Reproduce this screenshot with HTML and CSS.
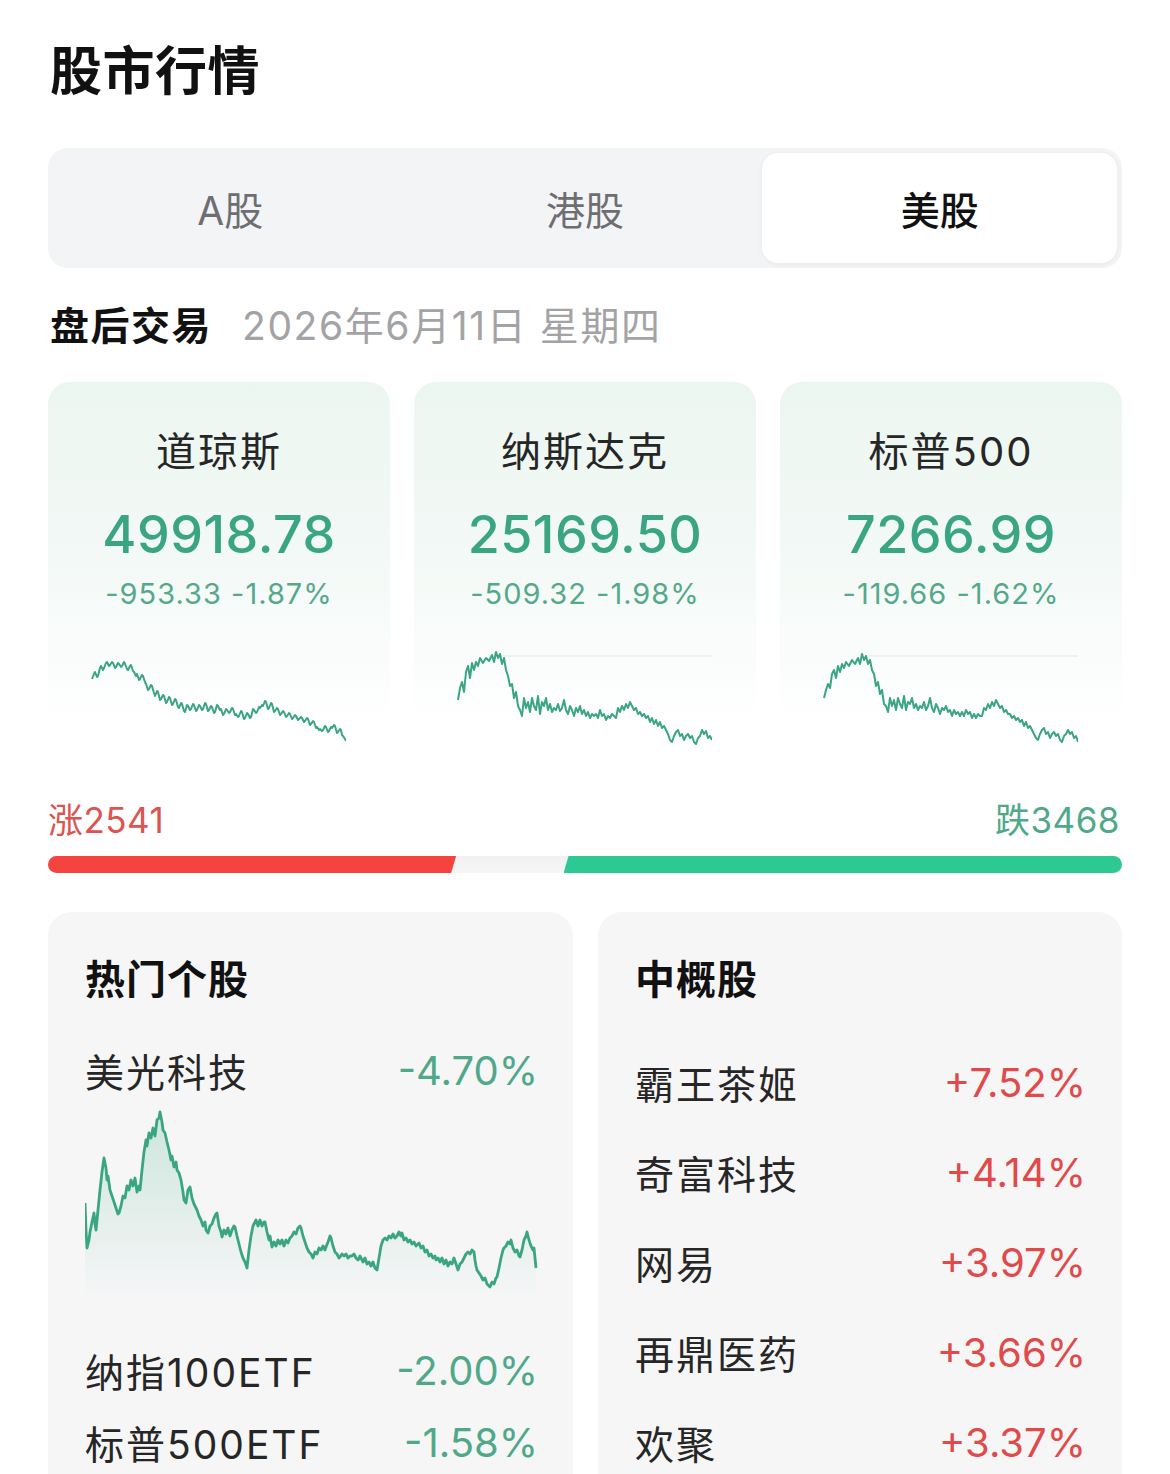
FILE: index.html
```html
<!DOCTYPE html>
<html lang="zh-CN">
<head>
<meta charset="utf-8">
<title>股市行情</title>
<link rel="stylesheet" href="styles.css">
</head>
<body>
<div class="page">
  <h1 class="title">股市行情</h1>

  <div class="tabs">
    <div class="tab">A股</div>
    <div class="tab">港股</div>
    <div class="tab active">美股</div>
  </div>

  <div class="session">
    <span class="session-name">盘后交易</span>
    <span class="session-date">2026年6月11日 星期四</span>
  </div>

  <div class="indices">
    <div class="index-card">
      <div class="index-name">道琼斯</div>
      <div class="index-value">49918.78</div>
      <div class="index-change">-953.33 -1.87%</div>
      <svg class="spark" width="256" height="100" viewBox="90 652 256 100">
        <polyline class="spark-line" points="92,683 94,678 95,676 97,681 98,680 100,672 101,670 103,674 104,672 106,667 107,666 109,670 110,669 112,666 113,667 115,672 116,671 118,667 119,668 121,671 122,670 124,666 125,668 127,673 128,674 130,670 131,669 133,675 134,676 136,680 137,678 139,684 140,683 142,679 143,680 145,686 146,688 148,694 149,693 151,689 152,690 154,697 155,700 157,695 158,696 160,704 161,703 163,699 164,700 166,707 167,706 169,701 170,702 172,709 173,708 175,703 176,704 178,711 179,712 181,707 182,708 184,715 185,716 187,709 188,710 190,714 191,713 193,708 194,709 196,715 197,714 199,709 200,710 202,714 203,713 205,707 206,708 208,715 209,714 211,710 212,711 214,717 215,716 217,709 218,710 220,714 221,713 223,719 224,718 226,713 227,714 229,717 230,716 232,712 233,713 235,719 236,718 238,721 239,720 241,715 242,716 244,723 245,722 247,717 248,718 250,722 251,721 253,713 254,714 256,717 257,716 259,711 260,712 262,709 263,710 265,705 266,706 268,713 269,712 271,707 272,708 274,716 275,715 277,712 278,713 280,719 281,718 283,715 284,716 286,721 287,720 289,717 290,718 292,723 293,722 295,719 296,720 298,724 299,723 301,721 302,722 304,726 305,725 307,722 308,723 310,729 311,728 313,725 314,726 316,732 317,731 319,734 320,733 322,735 323,734 325,730 326,731 328,736 329,735 331,731 332,732 334,729 335,730 337,737 338,736 340,733 341,734 342,739 343,740 345,743 346,745"/>
      </svg>
    </div>

    <div class="index-card">
      <div class="index-name">纳斯达克</div>
      <div class="index-value">25169.50</div>
      <div class="index-change">-509.32 -1.98%</div>
      <svg class="spark" width="256" height="100" viewBox="456 650 256 100">
        <line class="spark-base" x1="498" y1="658" x2="712" y2="658"/>
        <polyline class="spark-line" points="458,702 460,690 462,684 464,694 466,674 468,668 470,680 472,665 474,672 476,664 478,668 480,660 483,665 486,660 489,663 492,657 494,664 496,654 498,660 500,656 502,666 504,660 506,672 508,678 510,688 512,686 514,700 516,694 518,708 520,712 522,718 524,700 526,710 528,704 530,714 532,700 534,708 536,712 538,698 540,716 542,704 544,708 546,700 548,712 550,706 552,714 554,710 556,712 558,706 560,713 562,710 564,702 566,712 568,716 570,708 572,712 574,718 576,710 578,714 580,708 582,716 584,712 586,718 588,714 590,720 592,716 594,718 596,716 598,720 600,712 602,718 604,716 606,722 608,718 610,720 612,716 614,718 616,720 618,710 620,714 622,708 624,712 626,706 628,710 630,704 632,708 634,712 636,710 638,716 640,714 642,718 644,716 646,720 648,718 650,724 652,720 654,726 656,722 658,728 660,724 662,730 664,728 666,732 668,736 670,742 672,744 674,738 676,734 678,732 680,738 682,736 684,742 686,738 688,736 690,740 692,738 694,744 696,746 698,740 700,738 702,732 704,736 706,733 708,740 710,738 712,742"/>
      </svg>
    </div>

    <div class="index-card">
      <div class="index-name">标普500</div>
      <div class="index-value">7266.99</div>
      <div class="index-change">-119.66 -1.62%</div>
      <svg class="spark" width="256" height="100" viewBox="456 650 256 100">
        <line class="spark-base" x1="498" y1="658" x2="712" y2="658"/>
        <polyline class="spark-line" points="458,700 460,692 462,686 464,690 466,676 468,672 470,680 472,668 474,674 476,666 478,670 480,664 483,668 486,662 489,666 492,660 494,666 496,656 498,662 500,658 502,666 504,662 506,672 508,676 510,688 512,684 514,696 516,692 518,706 520,708 522,714 524,700 526,708 528,702 530,712 532,700 534,706 536,710 538,698 540,712 542,704 544,706 546,700 548,710 550,706 552,712 554,708 556,710 558,704 560,712 562,708 564,700 566,710 568,714 570,706 572,710 574,716 576,710 578,712 580,708 582,714 584,712 586,718 588,712 590,716 592,714 594,718 596,714 598,718 600,712 602,716 604,714 606,720 608,716 610,720 612,716 614,718 616,718 618,710 620,712 622,706 624,710 626,704 628,708 630,702 632,706 634,710 636,708 638,714 640,712 642,716 644,716 646,720 648,718 650,722 652,720 654,724 656,722 658,728 660,724 662,730 664,728 666,732 668,736 670,740 672,742 674,736 676,732 678,730 680,736 682,734 684,740 686,736 688,734 690,738 692,736 694,742 696,744 698,738 700,736 702,732 704,736 706,734 708,740 710,738 712,744"/>
      </svg>
    </div>
  </div>

  <div class="breadth">
    <span class="up-text">涨2541</span>
    <span class="down-text">跌3468</span>
  </div>
  <div class="breadth-bar">
    <div class="bar-up" style="width:38%"></div>
    <div class="bar-down" style="width:52%"></div>
  </div>

  <div class="panels">
    <div class="panel">
      <div class="panel-title">热门个股</div>
      <div class="row first">
        <span class="row-name">美光科技</span>
        <span class="row-value down">-4.70%</span>
      </div>
      <svg class="big-chart" width="453" height="200" viewBox="85 1100 453 200">
        <defs>
          <linearGradient id="fillGrad" x1="0" y1="0" x2="0" y2="1">
            <stop offset="0" stop-color="#3daa83" stop-opacity="0.22"/>
            <stop offset="1" stop-color="#3daa83" stop-opacity="0"/>
          </linearGradient>
        </defs>
        <polygon fill="url(#fillGrad)" points="85,1300 85,1203 86,1230 87,1248 89,1240 90,1232 92,1222 94,1213 95,1224 96,1230 98,1210 100,1190 102,1172 104,1158 106,1168 107,1180 108,1176 110,1190 112,1196 114,1202 116,1208 118,1214 119,1213 121,1206 123,1196 125,1198 127,1186 129,1190 131,1180 133,1186 135,1178 137,1192 139,1186 140,1190 142,1170 144,1152 146,1140 147,1146 149,1133 151,1138 153,1128 155,1136 157,1120 159,1118 160,1112 162,1122 163,1130 165,1133 167,1142 169,1150 171,1160 172,1156 174,1167 176,1162 177,1170 179,1173 181,1180 183,1192 184,1200 186,1203 188,1190 190,1187 192,1198 194,1204 196,1208 197,1210 199,1216 201,1220 203,1226 205,1222 206,1230 208,1233 210,1226 212,1224 214,1218 216,1214 217,1213 219,1226 221,1232 222,1237 224,1230 226,1234 228,1228 230,1236 232,1230 234,1226 235,1227 237,1236 239,1244 241,1252 243,1258 245,1262 247,1268 249,1250 251,1236 253,1226 255,1222 256,1220 258,1226 260,1220 262,1226 264,1222 265,1222 267,1232 269,1240 270,1236 272,1247 274,1242 276,1246 278,1240 280,1244 282,1240 284,1246 286,1240 288,1243 290,1238 292,1236 294,1232 296,1234 298,1228 300,1226 301,1228 303,1236 305,1242 307,1248 309,1252 311,1254 313,1258 315,1252 317,1254 319,1248 321,1250 323,1246 325,1250 326,1247 328,1242 330,1236 331,1238 333,1246 335,1252 337,1254 339,1258 340,1257 342,1254 344,1256 346,1254 348,1258 350,1256 352,1256 354,1254 356,1258 358,1260 360,1256 361,1258 363,1262 365,1258 367,1264 369,1262 371,1266 373,1262 375,1268 377,1270 379,1258 381,1246 383,1240 385,1238 387,1240 389,1236 391,1238 393,1234 395,1238 397,1236 399,1232 401,1236 402,1233 404,1240 406,1238 408,1242 410,1240 412,1244 414,1242 416,1246 418,1244 419,1243 421,1248 423,1246 425,1252 427,1250 429,1256 431,1254 433,1258 435,1256 436,1260 438,1258 440,1262 442,1258 444,1264 446,1260 448,1266 450,1262 452,1264 454,1258 456,1264 458,1270 460,1264 462,1262 464,1258 466,1254 468,1252 470,1254 472,1250 474,1252 475,1260 476,1266 477,1270 479,1273 481,1276 483,1280 485,1278 487,1284 489,1286 490,1287 492,1282 494,1284 496,1278 497,1277 499,1268 501,1258 503,1250 504,1248 506,1246 508,1242 510,1244 511,1240 513,1248 515,1252 517,1250 519,1256 520,1257 522,1250 524,1240 526,1236 527,1232 529,1240 531,1246 533,1250 534,1248 535,1258 536,1268 536,1300"/>
        <polyline class="big-line" points="85,1203 86,1230 87,1248 89,1240 90,1232 92,1222 94,1213 95,1224 96,1230 98,1210 100,1190 102,1172 104,1158 106,1168 107,1180 108,1176 110,1190 112,1196 114,1202 116,1208 118,1214 119,1213 121,1206 123,1196 125,1198 127,1186 129,1190 131,1180 133,1186 135,1178 137,1192 139,1186 140,1190 142,1170 144,1152 146,1140 147,1146 149,1133 151,1138 153,1128 155,1136 157,1120 159,1118 160,1112 162,1122 163,1130 165,1133 167,1142 169,1150 171,1160 172,1156 174,1167 176,1162 177,1170 179,1173 181,1180 183,1192 184,1200 186,1203 188,1190 190,1187 192,1198 194,1204 196,1208 197,1210 199,1216 201,1220 203,1226 205,1222 206,1230 208,1233 210,1226 212,1224 214,1218 216,1214 217,1213 219,1226 221,1232 222,1237 224,1230 226,1234 228,1228 230,1236 232,1230 234,1226 235,1227 237,1236 239,1244 241,1252 243,1258 245,1262 247,1268 249,1250 251,1236 253,1226 255,1222 256,1220 258,1226 260,1220 262,1226 264,1222 265,1222 267,1232 269,1240 270,1236 272,1247 274,1242 276,1246 278,1240 280,1244 282,1240 284,1246 286,1240 288,1243 290,1238 292,1236 294,1232 296,1234 298,1228 300,1226 301,1228 303,1236 305,1242 307,1248 309,1252 311,1254 313,1258 315,1252 317,1254 319,1248 321,1250 323,1246 325,1250 326,1247 328,1242 330,1236 331,1238 333,1246 335,1252 337,1254 339,1258 340,1257 342,1254 344,1256 346,1254 348,1258 350,1256 352,1256 354,1254 356,1258 358,1260 360,1256 361,1258 363,1262 365,1258 367,1264 369,1262 371,1266 373,1262 375,1268 377,1270 379,1258 381,1246 383,1240 385,1238 387,1240 389,1236 391,1238 393,1234 395,1238 397,1236 399,1232 401,1236 402,1233 404,1240 406,1238 408,1242 410,1240 412,1244 414,1242 416,1246 418,1244 419,1243 421,1248 423,1246 425,1252 427,1250 429,1256 431,1254 433,1258 435,1256 436,1260 438,1258 440,1262 442,1258 444,1264 446,1260 448,1266 450,1262 452,1264 454,1258 456,1264 458,1270 460,1264 462,1262 464,1258 466,1254 468,1252 470,1254 472,1250 474,1252 475,1260 476,1266 477,1270 479,1273 481,1276 483,1280 485,1278 487,1284 489,1286 490,1287 492,1282 494,1284 496,1278 497,1277 499,1268 501,1258 503,1250 504,1248 506,1246 508,1242 510,1244 511,1240 513,1248 515,1252 517,1250 519,1256 520,1257 522,1250 524,1240 526,1236 527,1232 529,1240 531,1246 533,1250 534,1248 535,1258 536,1268"/>
      </svg>
      <div class="row etf-first">
        <span class="row-name">纳指100ETF</span>
        <span class="row-value down">-2.00%</span>
      </div>
      <div class="row etf">
        <span class="row-name">标普500ETF</span>
        <span class="row-value down">-1.58%</span>
      </div>
    </div>

    <div class="panel panel-right">
      <div class="panel-title">中概股</div>
      <div class="list">
        <div class="row"><span class="row-name">霸王茶姬</span><span class="row-value up">+7.52%</span></div>
        <div class="row"><span class="row-name">奇富科技</span><span class="row-value up">+4.14%</span></div>
        <div class="row"><span class="row-name">网易</span><span class="row-value up">+3.97%</span></div>
        <div class="row"><span class="row-name">再鼎医药</span><span class="row-value up">+3.66%</span></div>
        <div class="row"><span class="row-name">欢聚</span><span class="row-value up">+3.37%</span></div>
      </div>
    </div>
  </div>
</div>
</body>
</html>
```

FILE: styles.css
```css
* { box-sizing: border-box; }

html, body {
  margin: 0;
  padding: 0;
  background: #ffffff;
}

body {
  font-family: "Inter", "Noto Sans CJK SC", sans-serif;
  color: #1f1f1f;
}

.page {
  padding: 41px 48px 0 48px;
  height: 1474px;
  overflow: hidden;
}

.title {
  margin: 0;
  font-size: 52px;
  line-height: 62px;
  font-weight: 700;
  color: #111;
  padding-left: 2px;
  letter-spacing: 0.5px;
}

.tabs {
  margin-top: 45px;
  height: 120px;
  background: #f3f4f6;
  border-radius: 20px;
  padding: 5px;
  display: grid;
  grid-template-columns: 1fr 1fr 1fr;
}

.tab {
  display: flex;
  align-items: center;
  justify-content: center;
  font-size: 39px;
  color: #6e6e72;
  border-radius: 16px;
}

.tab.active {
  background: #ffffff;
  color: #111;
  font-weight: 500;
  box-shadow: 0 1px 6px rgba(0, 0, 0, 0.05);
}

.session {
  margin-top: 31px;
  height: 48px;
  display: flex;
  align-items: center;
  gap: 30px;
  padding-left: 2px;
}

.session-name {
  font-size: 39px;
  font-weight: 700;
  color: #111;
  letter-spacing: 1.5px;
}

.session-date {
  font-size: 39px;
  color: #a3a3a6;
  letter-spacing: 1.6px;
}

.indices {
  margin-top: 35px;
  display: grid;
  grid-template-columns: repeat(3, 1fr);
  gap: 24px;
}

.index-card {
  height: 390px;
  border-radius: 22px;
  background: linear-gradient(180deg, #ecf6f1 0%, #f3f9f6 45%, #ffffff 88%);
  padding-top: 46px;
  display: flex;
  flex-direction: column;
  align-items: center;
}

.index-name {
  font-size: 40px;
  line-height: 48px;
  color: #262626;
  letter-spacing: 2px;
}

.index-value {
  margin-top: 29px;
  font-size: 52px;
  line-height: 60px;
  font-weight: 500;
  color: #3aa681;
  letter-spacing: 0.5px;
}

.index-change {
  margin-top: 11px;
  font-size: 29px;
  line-height: 36px;
  color: #55a98b;
  letter-spacing: 1px;
}

.spark {
  display: block;
  align-self: flex-start;
  margin-left: 42px;
  margin-top: 36px;
}

.spark-line {
  fill: none;
  stroke: #3aa681;
  stroke-width: 2;
  stroke-linejoin: round;
}

.spark-base {
  stroke: #eaeeec;
  stroke-width: 1.5;
}

.breadth {
  margin-top: 23px;
  height: 44px;
  display: flex;
  justify-content: space-between;
  align-items: center;
  font-size: 35px;
  letter-spacing: 0.5px;
}

.up-text { color: #dc5350; }
.down-text { color: #4fa989; padding-right: 2px; }

.breadth-bar {
  margin-top: 17px;
  height: 17px;
  background: linear-gradient(180deg, #f0f0f0, #f6f6f6);
  border-radius: 9px;
  display: flex;
  justify-content: space-between;
}

.bar-up {
  background: #f5433f;
  border-radius: 9px 0 0 9px;
  clip-path: polygon(0 0, 100% 0, calc(100% - 5px) 100%, 0 100%);
}

.bar-down {
  background: #2cc993;
  border-radius: 0 9px 9px 0;
  clip-path: polygon(5px 0, 100% 0, 100% 100%, 0 100%);
}

.panels {
  margin-top: 39px;
  display: grid;
  grid-template-columns: 525px 1fr;
  gap: 25px;
}

.panel {
  background: #f6f6f7;
  border-radius: 24px;
  padding: 42px 35px 40px 37px;
  min-height: 620px;
}

.panel-right {
  padding-left: 37px;
  padding-right: 36px;
}

.panel-title {
  font-size: 40px;
  line-height: 52px;
  font-weight: 700;
  color: #111;
  letter-spacing: 1px;
}

.row {
  display: flex;
  justify-content: space-between;
  align-items: center;
  height: 52px;
  margin-top: 38px;
}

.row.first { margin-top: 38px; }

.row-name {
  font-size: 39px;
  color: #262626;
  letter-spacing: 2px;
}

.row-value {
  font-size: 40px;
}

.row-value.down { color: #4fa989; }
.row-value.up { color: #e04a4a; }

.big-chart {
  display: block;
  margin-top: 4px;
}

.big-line {
  fill: none;
  stroke: #3aa681;
  stroke-width: 2.8;
  stroke-linejoin: round;
}

.row.etf-first { margin-top: 44px; }
.row.etf { margin-top: 20px; }

.list {
  padding-top: 12px;
}
```
